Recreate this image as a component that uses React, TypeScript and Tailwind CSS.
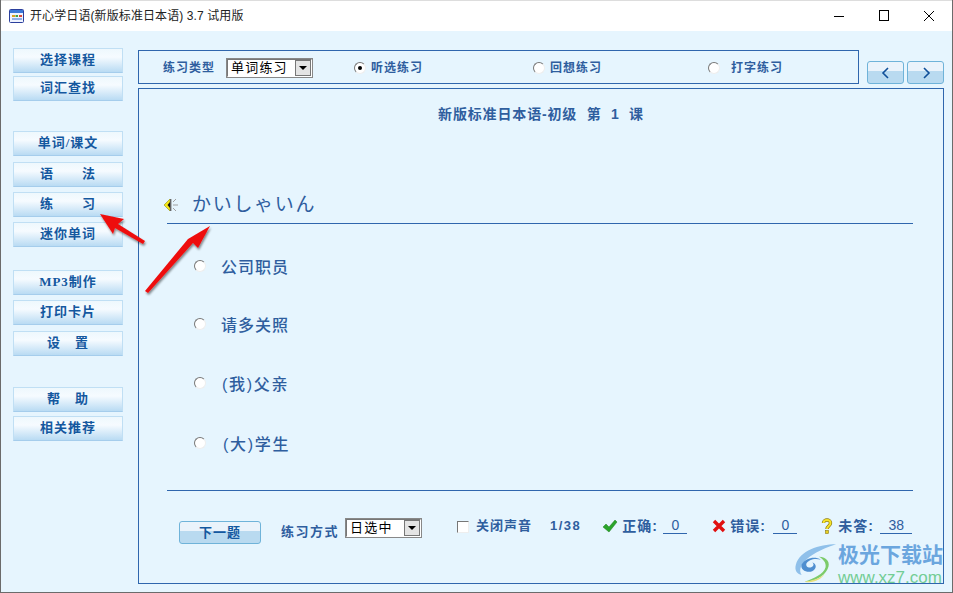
import React from "react";

const F = '"Liberation Sans","Noto Sans CJK SC",sans-serif';

const side: [string, string][] = [
  ["选择课程", "mt-0"],
  ["词汇查找", "mt-[3px]"],
  ["单词/课文", "mt-[30px]"],
  ["语　　法", "mt-[6px]"],
  ["练　　习", "mt-[5px]"],
  ["迷你单词", "mt-[5px]"],
  ["MP3制作", "mt-[23px]"],
  ["打印卡片", "mt-[5px]"],
  ["设　置", "mt-[6px]"],
  ["帮　助", "mt-[31px]"],
  ["相关推荐", "mt-[4px]"],
];

function Radio({ on }: { on?: boolean }) {
  return (
    <span className="relative block h-[12px] w-[12px] shrink-0 rounded-full border border-t-[#777] border-l-[#777] border-r-[#eee] border-b-[#eee] bg-white">
      {on && <span className="absolute left-[3px] top-[3px] h-[4px] w-[4px] rounded-full bg-black" />}
    </span>
  );
}

function Select({ text, w }: { text: string; w: string }) {
  return (
    <div className={`${w} flex h-[20px] shrink-0 items-center justify-between border-2 border-t-[#777] border-l-[#777] border-r-white border-b-white bg-white pl-[3px] text-[13px] font-normal tracking-[1.2px] text-black outline outline-1 -outline-offset-1 outline-[#888]`}>
      <span>{text}</span>
      <span className="flex h-[16px] w-[16px] items-center justify-center border border-[#777] bg-[#e4e4e4]">
        <span className="h-0 w-0 border-x-[4px] border-t-[4px] border-x-transparent border-t-black" />
      </span>
    </div>
  );
}

function Nav({ d, cls }: { d: string; cls: string }) {
  return (
    <div className={`${cls} flex h-[23px] w-[37px] items-center justify-center rounded-[3px] border border-[#6fb3d9] bg-[linear-gradient(#eaf3fb_0_45%,#b9daf0_45%_100%)]`}>
      <svg width="10" height="12" viewBox="0 0 10 12">
        <path d={d} fill="none" stroke="#0f4f98" strokeWidth="1.6" />
      </svg>
    </div>
  );
}

function Option({ text, cls, tx }: { text: string; cls: string; tx: string }) {
  return (
    <div className={`${cls} flex h-[22px] items-center pl-[55px]`}>
      <Radio />
      <span className={`${tx} mt-[4px] whitespace-nowrap text-[16px] font-medium text-[#2f5e9e]`}>{text}</span>
    </div>
  );
}

function Score(props: { label: string; val: string; w: string; lw: string; gap: string; icon: React.ReactNode; cls: string; iw: string }) {
  const { label, val, w, lw, gap, icon, cls, iw } = props;
  return (
    <div className={`${cls} flex h-[16px] shrink-0 items-center`}>
      <span className={`${iw} flex shrink-0 justify-start`}>{icon}</span>
      <span className={`${lw} shrink-0 whitespace-nowrap text-[14px] leading-[16px] tracking-[1px]`}>{label}</span>
      <span className={`${w} ${gap} h-[16px] shrink-0 border-b border-[#2f66ad] text-center text-[14px] font-normal leading-[15px]`}>{val}</span>
    </div>
  );
}

export default function App() {
  return (
    <div className="relative flex h-[593px] w-[953px] flex-col overflow-hidden border-x border-b border-[#6b6b6b] bg-[#e6f5fe]" style={{ fontFamily: F }}>
      <div className="flex h-[31px] shrink-0 items-center border-t border-[#ddd] bg-white pl-[8px] text-[12px] tracking-[0.1px] text-[#222]">
        <svg width="15" height="14" viewBox="0 0 15 14" className="shrink-0">
          <rect x=".5" y=".5" width="14" height="13" rx="1" fill="#eef3ff" stroke="#2b3f9c" />
          <rect x="1" y="1" width="13" height="3" fill="#3a78d8" />
          <rect x="3" y="6" width="3" height="2" fill="#d8a020" />
          <rect x="6.5" y="6" width="2.5" height="2" fill="#3aa14a" />
          <rect x="10" y="6" width="3" height="2" fill="#d84a3a" />
          <rect x="3" y="9" width="10" height="2" fill="#8fb0e8" />
        </svg>
        <span className="ml-[6px] whitespace-nowrap">开心学日语(新版标准日本语) 3.7 试用版</span>
        <div className="ml-auto flex h-full items-center pr-[17px]">
          <svg width="12" height="12" viewBox="0 0 12 12"><path d="M1 6.5h10" stroke="#000" /></svg>
          <svg width="12" height="12" viewBox="0 0 12 12" className="ml-[33px]"><rect x="1.5" y=".5" width="9" height="10" fill="none" stroke="#000" /></svg>
          <svg width="12" height="12" viewBox="0 0 12 12" className="ml-[33px]"><path d="M1 1l10 10M11 1L1 11" stroke="#000" /></svg>
        </div>
      </div>

      <div className="flex flex-1 pl-[12px]">
        <div className="w-[110px] shrink-0 pt-[17px]">
          {side.map(([t, m]) => (
            <div key={t} className={`${m} flex h-[25px] items-center justify-center whitespace-pre border border-[#c0dff4] border-b-[#a5cdec] bg-[linear-gradient(#eef8fd,#f6fbff_35%,#b9dbf3)] pb-[1px] font-['Liberation_Serif','Noto_Sans_CJK_SC',serif] text-[13px] font-bold tracking-[1px] text-[#14589f]`}>
              {t}
            </div>
          ))}
        </div>

        <div className="ml-[15px] w-[806px] shrink-0 pt-[19px]">
          <div className="flex items-end">
            <div className="flex h-[34px] w-[721px] items-center border border-[#2f66ad] pl-[24px] pt-[2px] text-[12px] font-bold text-[#2f5e9e]">
              <span className="w-[52px] shrink-0 tracking-[1px]">练习类型</span>
              <div className="ml-[11px]"><Select text="单词练习" w="w-[87px]" /></div>
              <div className="ml-[41px]"><Radio on /></div>
              <span className="ml-[5px] w-[52px] shrink-0 tracking-[1px]">听选练习</span>
              <div className="ml-[110px]"><Radio /></div>
              <span className="ml-[5px] w-[52px] shrink-0 tracking-[1px]">回想练习</span>
              <div className="ml-[106px]"><Radio /></div>
              <span className="ml-[11px] w-[52px] shrink-0 tracking-[1px]">打字练习</span>
            </div>
            <Nav d="M7 1L2 6l5 5" cls="ml-[8px]" />
            <Nav d="M3 1l5 5-5 5" cls="ml-[3px]" />
          </div>

          <div className="mt-[4px] h-[496px] border border-[#2f66ad]">
            <div className="whitespace-pre pt-[15px] text-center text-[14px] font-bold leading-[20px] tracking-[0.85px] text-[#2f5e9e]">新版标准日本语-初级  第  1  课</div>
            <div className="mt-[65px] flex h-[32px] items-center pl-[24px]">
              <svg width="16" height="16" viewBox="0 0 16 16" className="shrink-0">
                <path d="M1 8l6-6v12z" fill="#f6e81a" stroke="#9a9a20" strokeWidth=".7" />
                <path d="M4.5 8L7 5v6z" fill="#111" />
                <rect x="7" y="2" width="1.4" height="12" fill="#666" />
                <path d="M10 8h5M10 5l3-3M10 11l3 3" stroke="#a0a0a0" />
              </svg>
              <span className="ml-[13px] whitespace-nowrap text-[19px] tracking-[1.7px] text-[#2f5e9e]">かいしゃいん</span>
            </div>
            <div className="ml-[28px] mt-[2px] w-[746px] border-t border-[#2f66ad]" />
            <Option text="公司职员" cls="mt-[31px]" tx="ml-[15px] tracking-[1px]" />
            <Option text="请多关照" cls="mt-[36px]" tx="ml-[15px] tracking-[1px]" />
            <Option text="(我)父亲" cls="mt-[37px]" tx="ml-[16px] tracking-[1.7px]" />
            <Option text="(大)学生" cls="mt-[38px]" tx="ml-[17px] tracking-[1.7px]" />
            <div className="ml-[28px] mt-[36px] w-[746px] border-t border-[#2f66ad]" />
            <div className="ml-[40px] mt-[27px] flex items-start text-[13px] font-bold text-[#2f5e9e]">
              <div className="mt-[3px] flex h-[23px] w-[82px] shrink-0 items-center justify-center rounded-[3px] border border-[#6fb3d9] bg-[linear-gradient(#eaf3fb_0_42%,#b9daf0_42%_100%)] tracking-[1px] text-[#14589f]">下一题</div>
              <span className="ml-[20px] mt-[4px] w-[58px] shrink-0 tracking-[1.5px]">练习方式</span>
              <div className="ml-[6px]"><Select text="日选中" w="w-[77px]" /></div>
              <span className="ml-[35px] mt-[3px] h-[12px] w-[12px] shrink-0 border border-t-[#777] border-l-[#777] border-r-[#eee] border-b-[#eee] bg-white" />
              <span className="ml-[7px] w-[56px] shrink-0 leading-[16px] tracking-[1px]">关闭声音</span>
              <span className="ml-[18px] leading-[16px] tracking-[1.5px]">1/38</span>
              <Score
                cls="ml-[21px]"
                iw="w-[20px]"
                lw="w-[37px]"
                gap="ml-[4px]"
                label="正确:"
                val="0"
                w="w-[24px]"
                icon={<svg width="16" height="14" viewBox="0 0 16 14"><path d="M1 8l3-3 3 3 6-7 2 2-8 10z" fill="#2aa52a" stroke="#1c7a1c" strokeWidth=".5" /></svg>}
              />
              <Score
                cls="ml-[25px]"
                iw="w-[18px]"
                lw="w-[37px]"
                gap="ml-[6px]"
                label="错误:"
                val="0"
                w="w-[24px]"
                icon={<svg width="14" height="14" viewBox="0 0 14 14"><path d="M2 2l10 10M12 2L2 12" stroke="#e01010" strokeWidth="3.4" /></svg>}
              />
              <Score
                cls="ml-[24px]"
                iw="w-[17px]"
                lw="w-[38px]"
                gap="ml-[4px]"
                label="未答:"
                val="38"
                w="w-[32px]"
                icon={<svg width="12" height="16" viewBox="0 0 12 16"><path d="M2.5 5C2.5 1 9.5 1 9.5 5c0 3-3.5 3-3.5 6" fill="none" stroke="#8a7a10" strokeWidth="3.4" /><path d="M2.5 5C2.5 1 9.5 1 9.5 5c0 3-3.5 3-3.5 6" fill="none" stroke="#f6e22a" strokeWidth="2" /><rect x="4.5" y="12.5" width="3" height="3" fill="#e8d020" stroke="#8a7a10" strokeWidth=".6" /></svg>}
              />
            </div>
          </div>
        </div>
      </div>

      {/* annotation arrows lying over the page */}
      <svg className="pointer-events-none absolute left-[-1px] top-0" width="953" height="593" viewBox="0 0 953 593">
        <defs>
          <filter id="s" x="-30%" y="-30%" width="160%" height="160%">
            <feDropShadow dx="1" dy="2" stdDeviation="1.2" floodColor="#000" floodOpacity=".45" />
          </filter>
        </defs>
        <g filter="url(#s)" fill="#ee0f0f">
          <path d="M100 214L124 219L118 224L145 241L143 244L115 228L113 234Z" />
          <path d="M210 226L198 248L193 243L148 293L145 291L188 239Z" />
        </g>
      </svg>

      {/* download-site watermark */}
      <div className="pointer-events-none absolute left-[793px] top-[543px] flex">
        <svg width="44" height="41" viewBox="0 0 46 42">
          <path d="M44 1C26 1 6 8 2 22c-2 7 2 10 6 11C3 26 10 12 44 1z" fill="#8fc0ea" />
          <path d="M8 22c4-7 14-9 20-5-6-2-13 0-15 4-1 3 2 5 5 4 3-1 3-4 1-5 5 1 5 7 0 9-5 2-13-1-11-7z" fill="#4f8fd0" />
          <path d="M26 14c8 0 13 6 9 13-4 8-14 13-24 13 10-3 20-8 22-15 1-5-3-9-7-11z" fill="#7ccb6a" />
          <path d="M11 40c8-1 16-3 21-8-4 6-12 10-21 8z" fill="#e9e07a" />
        </svg>
        <div className="mt-[1px]">
          <div className="whitespace-nowrap text-[21px] font-bold leading-[22px] text-[#6ba6de]">极光下载站</div>
          <div className="mt-[4px] whitespace-nowrap text-[17px] leading-[16px] text-[#73cd95]">www.xz7.com</div>
        </div>
      </div>
    </div>
  );
}
